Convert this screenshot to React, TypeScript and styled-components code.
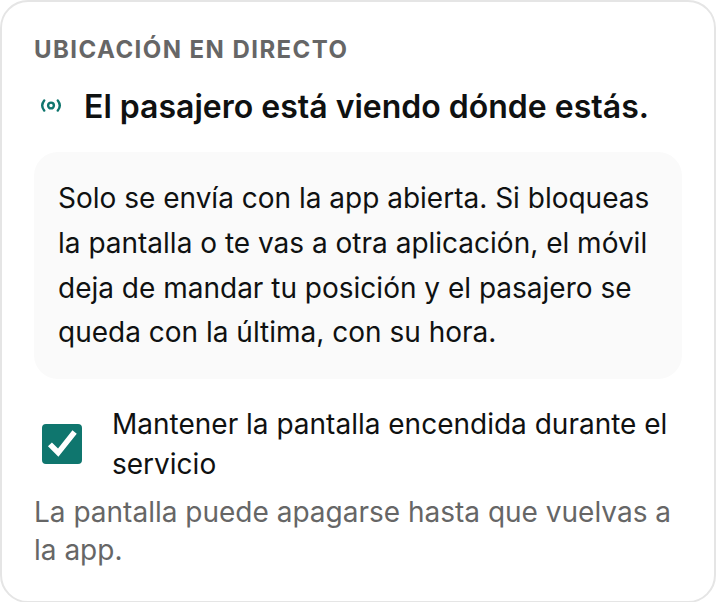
import React from "react";
import styled, { createGlobalStyle } from "styled-components";

const GlobalStyle = createGlobalStyle`
  * { box-sizing: border-box; }
  body { margin: 0; background: #fff; font-family: Inter, "Liberation Sans", sans-serif; color: #0f1111; }
`;

const Card = styled.section`
  min-height: 100vh;
  padding: 30px 32px 32px;
  border: 2px solid #e5e5e5;
  border-radius: 28px;
  background: #fff;
`;

const Eyebrow = styled.h2`
  margin: 0;
  font-size: 24px;
  line-height: 36px;
  font-weight: 700;
  letter-spacing: 0.06em;
  text-transform: uppercase;
  color: #666;
`;

const Status = styled.p`
  display: flex;
  align-items: center;
  gap: 16px;
  margin: 14px 0 0;
  font-size: 32px;
  line-height: 50px;
  font-weight: 600;
`;

const IconSlot = styled.span`
  display: flex;
  justify-content: center;
  width: 34px;
  color: #0f766e;
`;

const Note = styled.p`
  margin: 20px 0 0;
  padding: 24px;
  border-radius: 24px;
  background: #fafafa;
  font-size: 28px;
  line-height: 1.6;
`;

const Option = styled.label`
  display: flex;
  align-items: center;
  gap: 30px;
  margin: 25px 0 0;
  padding-left: 8px;
  font-size: 28px;
  line-height: 40px;
`;

const Checkbox = styled.input`
  appearance: none;
  flex: none;
  display: grid;
  width: 40px;
  height: 40px;
  margin: 0;
  border: 2px solid #0f766e;
  border-radius: 4px;
  background: #fff;
  &:checked { background: #0f766e; }
  &:checked::after {
    content: "";
    background: #fff;
    clip-path: polygon(11% 56%, 22% 45%, 39% 62%, 79% 11%, 91% 21%, 40% 85%);
  }
`;

const Hint = styled.p`
  margin: 9px 0 0;
  font-size: 28px;
  line-height: 38px;
  color: #666;
`;

function LiveIcon() {
  return (
    <svg width="22" height="18" viewBox="0 0 22 18" fill="none" stroke="currentColor" strokeWidth="2.4" strokeLinecap="round" aria-hidden="true">
      <circle cx="11" cy="7.5" r="2.9" />
      <path d="M4.2 2.4Q0.2 7.5 4.2 12.6M17.8 2.4Q21.8 7.5 17.8 12.6" />
    </svg>
  );
}

export default function App() {
  return (
    <>
      <GlobalStyle />
      <Card>
        <Eyebrow>Ubicación en directo</Eyebrow>
        <Status><IconSlot><LiveIcon /></IconSlot>El pasajero está viendo dónde estás.</Status>
        <Note>Solo se envía con la app abierta. Si bloqueas la pantalla o te vas a otra aplicación, el móvil deja de mandar tu posición y el pasajero se queda con la última, con su hora.</Note>
        <Option htmlFor="keep-awake">
          <Checkbox id="keep-awake" type="checkbox" defaultChecked aria-describedby="keep-awake-hint" />
          <span>Mantener la pantalla encendida durante el servicio</span>
        </Option>
        <Hint id="keep-awake-hint">La pantalla puede apagarse hasta que vuelvas a la app.</Hint>
      </Card>
    </>
  );
}
